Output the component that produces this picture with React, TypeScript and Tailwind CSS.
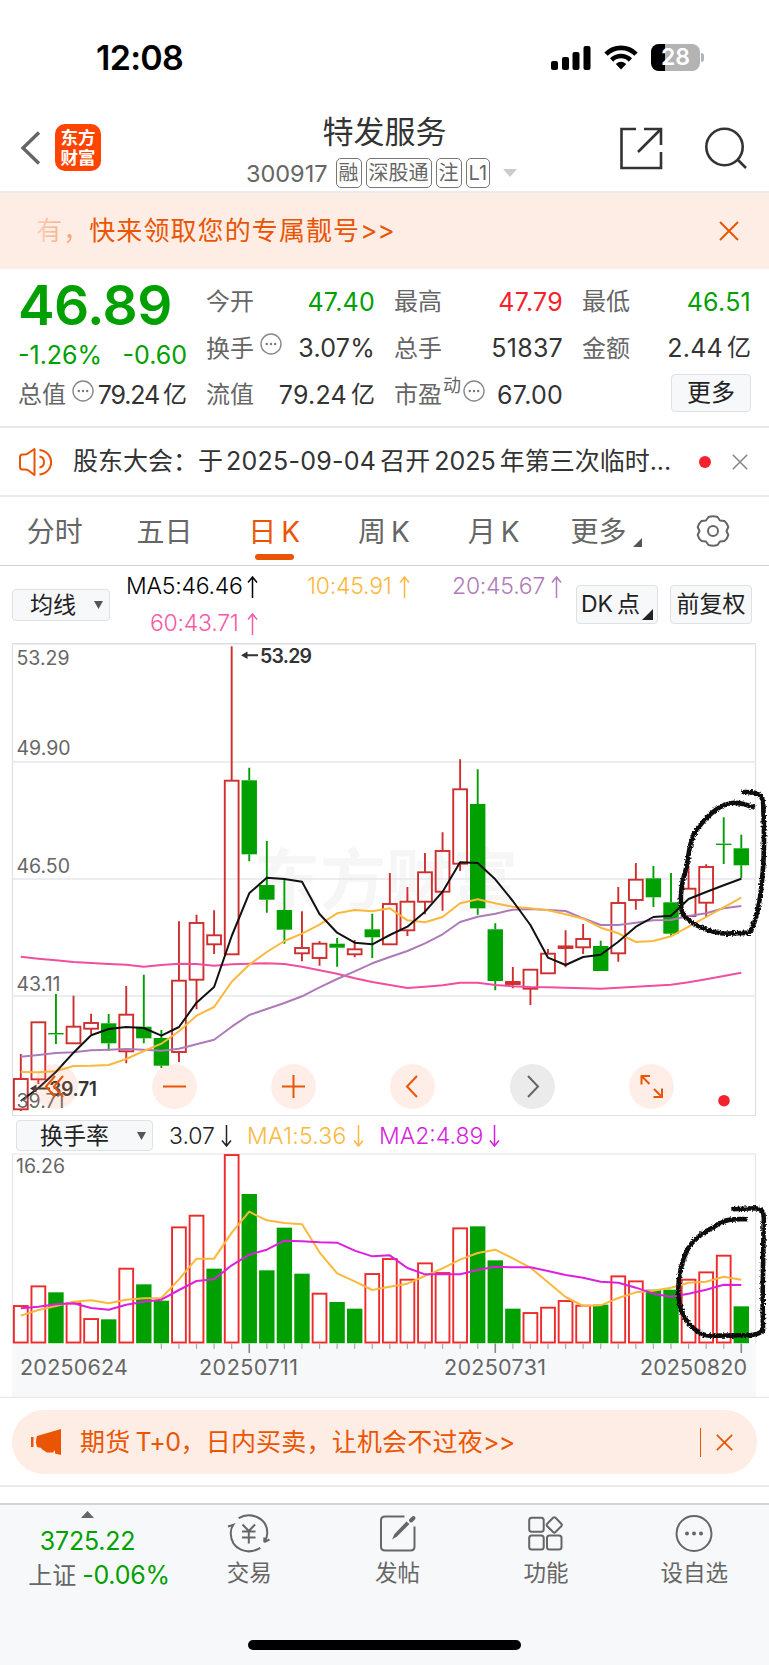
import type { ReactNode } from "react";

const GREEN = "#00a000";
const RED = "#cf2e2e";

type Candle = [kind: "r" | "g", top: number, bottom: number, high: number, low: number];

// body top, body bottom, wick top, wick bottom
const candles: Candle[] = [
  ["r", 1079, 1109.3, 1054, 1111],
  ["r", 1022.3, 1079.3, 1022.3, 1084],
  ["g", 1033, 1034.4, 994, 1044],
  ["r", 1026.7, 1043.3, 995.7, 1043.3],
  ["r", 1023, 1028.7, 1013.7, 1034],
  ["g", 1023.3, 1043.3, 1014, 1050.7],
  ["r", 1014.7, 1051.3, 986, 1063.3],
  ["g", 1026.7, 1038.3, 974.7, 1043.3],
  ["g", 1038, 1065.7, 1030, 1068],
  ["r", 980.7, 1052, 921.3, 1062],
  ["r", 923, 979.7, 914.7, 1009.3],
  ["r", 935.3, 944.3, 910.3, 954],
  ["r", 780.7, 954.3, 646.3, 954.3],
  ["g", 780.3, 854.3, 767.7, 861.3],
  ["g", 885, 899.7, 841, 912.7],
  ["g", 910, 929.7, 879, 943.7],
  ["r", 948, 953.3, 911.3, 961.3],
  ["r", 943.7, 958, 941, 965.7],
  ["g", 943.7, 947.7, 938, 966.7],
  ["r", 949.3, 954.3, 940, 957.3],
  ["g", 929.3, 937.3, 913.7, 958],
  ["r", 904, 944.3, 873, 944.3],
  ["r", 901.7, 930.3, 887, 936],
  ["r", 872.3, 901.7, 853, 914.3],
  ["r", 851, 891.7, 832.3, 910.7],
  ["r", 789.3, 863.7, 759.3, 871],
  ["g", 804, 908.3, 769.3, 914.7],
  ["g", 929.3, 981, 923.3, 990.3],
  ["r", 982, 984, 967, 988.3],
  ["r", 969.7, 988.7, 969.7, 1005],
  ["r", 953.7, 973.3, 949, 973.3],
  ["r", 946.4, 948, 930.3, 967.3],
  ["r", 939, 947.3, 924, 954],
  ["g", 946, 971, 940.7, 971],
  ["r", 903, 953.3, 887, 961.7],
  ["r", 879.7, 900, 863, 909.7],
  ["g", 878.3, 897.3, 866, 907],
  ["g", 902.3, 933.7, 873, 935.7],
  ["r", 888.7, 916, 866, 916],
  ["r", 867, 902.7, 864.3, 917.3],
  ["g", 843.6, 845, 817.3, 864],
  ["g", 848.3, 865.3, 834.7, 878.3],
];

const ma5 = [1101, 1088, 1072, 1052.7, 1035.3, 1029, 1027, 1028, 1035.7, 1027, 1002.7, 987, 936, 893.3, 877.7, 879, 881.7, 914, 932.7, 942.7, 944.3, 935, 926.7, 911.7, 891.7, 862.3, 863, 879.3, 901, 925, 957.7, 965, 957, 954.7, 941.7, 926.7, 917, 915.7, 899, 892, 885.3, 878.7];
const ma10 = [1072, 1072.3, 1071.3, 1066, 1065.7, 1065, 1059, 1051, 1043.7, 1031.3, 1015.7, 1007, 981.7, 964.7, 952, 941, 933.7, 924.7, 913.3, 910, 911.3, 908.3, 920.3, 922.3, 917, 903.3, 899.3, 903.3, 906.7, 908.3, 910.3, 914.3, 918.7, 927.7, 933.3, 942, 941, 936.3, 926.7, 917, 907.3, 897.7];
const ma20 = [1056.7, 1055, 1053, 1052.3, 1050.3, 1049.7, 1049, 1049.7, 1050.7, 1048.7, 1044.3, 1039.7, 1026.7, 1015, 1009, 1003, 996.3, 987.3, 979, 971.3, 963.3, 957, 951, 943.3, 934.3, 922, 916.7, 913.7, 909.7, 909, 910, 911, 918.3, 925, 925, 922.7, 920.3, 920, 916, 913.3, 908.3, 906];
const ma60 = [956.7, 958.7, 960.3, 962, 963, 964, 964.7, 966.7, 965, 963.7, 964, 965.7, 964.3, 963.7, 963.3, 964, 966.7, 970.3, 973.7, 978.3, 982, 985, 988, 986.7, 985.3, 982.7, 982.7, 985, 986.3, 987, 987.3, 987.7, 988.3, 988.7, 987.7, 986.7, 985.7, 984.7, 982.3, 979.3, 976, 972.7];

// turnover bars, in thirds of a pixel below y = 1110
const turnover = [586, 527, 547, 578, 625, 628, 474, 523, 572, 350, 315, 476, 133, 252, 481, 353, 491, 549, 576, 596, 490, 445, 507, 458, 487, 353, 349, 451, 596, 607, 591, 571, 585, 584, 497, 512, 539, 539, 507, 485, 435, 589];
const turnoverKinds = "rrgrrgrggrrgrggggrggrrrrrrgggrrrrgrrggrrrg";
const tma1 = [617, 600, 588, 575, 571, 580, 569, 565, 564, 508, 446, 446, 368, 305, 331, 339, 343, 427, 490, 514, 540, 530, 521, 498, 475, 449, 429, 419, 445, 473, 517, 561, 588, 586, 564, 547, 542, 533, 518, 515, 500, 509];
const tma2 = [595, 590, 583, 580, 594, 599, 584, 575, 569, 540, 513, 508, 466, 434, 419, 392, 394, 397, 398, 422, 439, 436, 474, 493, 493, 493, 480, 470, 472, 472, 483, 495, 503, 515, 518, 533, 551, 560, 551, 539, 524, 525];

const cx = (i: number) => 20.8 + i * 17.573;
const ty = (v: number) => 1110 + v / 3;
const line = (ys: number[]) => ys.map((y, i) => `${cx(i).toFixed(1)},${y}`).join(" ");

const Close = ({ size, className = "" }: { size: number; className?: string }) => (
  <svg width={size} height={size} viewBox="0 0 20 20" className={className} fill="none" stroke="currentColor" strokeWidth="2">
    <path d="M1 1L19 19M19 1L1 19" />
  </svg>
);

const Info = () => (
  <svg width="22" height="22" viewBox="0 0 22 22" className="shrink-0">
    <circle cx="11" cy="11" r="10" fill="none" stroke="#888" strokeWidth="1.4" />
    <circle cx="6.8" cy="11" r="1.2" fill="#777" />
    <circle cx="11" cy="11" r="1.2" fill="#777" />
    <circle cx="15.2" cy="11" r="1.2" fill="#777" />
  </svg>
);

const Arrow = ({ down = false }: { down?: boolean }) => (
  <svg width="11" height="22" viewBox="0 0 11 22" fill="none" stroke="currentColor" strokeWidth="1.5" className={down ? "rotate-180" : ""}>
    <path d="M5.5 22V1M1 6.5L5.5 1L10 6.5" />
  </svg>
);

const StatusBar = () => (
  <div className="flex h-[101px] items-start justify-between pl-[96px] pr-[65px] pt-[43px]">
    <span className="text-[34px] font-semibold leading-[30px] tracking-[-0.02em] text-black">12:08</span>
    <div className="flex items-center gap-[13px] pt-px">
      <svg width="40" height="26" viewBox="0 0 40 26">
        <rect x="0" y="16" width="7" height="9" rx="2" />
        <rect x="11" y="12" width="7" height="13" rx="2" />
        <rect x="21.5" y="7" width="7" height="18" rx="2" />
        <rect x="32.5" y="1" width="7" height="24" rx="2" />
      </svg>
      <svg width="34" height="25" viewBox="0 0 34 25" fill="none" stroke="black" strokeWidth="4.6">
        <path d="M2 9.2C10 0.8 24 0.8 32 9.2" />
        <path d="M7.6 15C13 9.7 21 9.7 26.4 15" />
        <path d="M17 24.5L11.8 19Q17 14.5 22.2 19Z" fill="black" stroke="none" />
      </svg>
      <div className="flex items-center">
        <div className="relative h-[27px] w-[49px] overflow-hidden rounded-[8px] bg-[#b3b3b3]">
          <div className="absolute inset-y-0 left-0 w-[14px] bg-black" />
          <span className="relative block text-center text-[23px] font-semibold leading-[27px] text-white">28</span>
        </div>
        <div className="ml-[1px] h-[9px] w-[3px] rounded-r-full bg-[#b3b3b3]" />
      </div>
    </div>
  </div>
);

const Tag = ({ children }: { children: ReactNode }) => (
  <span className="flex h-[30px] items-center rounded-[5px] border-[1.5px] border-[#777] px-[2px] text-[20px] leading-none text-[#666]">{children}</span>
);

const Header = () => (
  <header className="flex h-[92px] items-start justify-between border-b-2 border-[#ebebee]">
    <div className="flex w-[200px] items-center gap-[14px] pl-[20px] pt-[23px]">
      <svg width="21" height="34" viewBox="0 0 21 34" fill="none" stroke="#666" strokeWidth="3.4">
        <path d="M19 1.5L3 17L19 32.5" />
      </svg>
      <div className="flex h-[47px] w-[46px] flex-col items-center justify-center rounded-[10px] bg-[#ff4400] text-[17.5px] font-bold leading-[20px] text-white">
        <span>东方</span>
        <span>财富</span>
      </div>
    </div>
    <div className="flex flex-col items-center pt-[11px]">
      <h1 className="text-[31px] leading-[40px] text-[#333]">特发服务</h1>
      <div className="mt-[6px] flex items-center gap-[4px] pr-[6px]">
        <span className="mr-[4px] text-[23.5px] leading-[29px] text-[#666]">300917</span>
        <Tag>融</Tag>
        <Tag>深股通</Tag>
        <Tag>注</Tag>
        <Tag>L1</Tag>
        <svg width="14" height="8" viewBox="0 0 14 8" className="ml-[9px]"><path d="M0 0H14L7 8Z" fill="#ccc" /></svg>
      </div>
    </div>
    <div className="flex w-[200px] items-center justify-end gap-[41px] pr-[22px] pt-[26px]">
      <svg width="44" height="43" viewBox="0 0 44 43" fill="none" stroke="#333" strokeWidth="2.6">
        <path d="M17 2H2.5V41H42V25M25 2H42V18M42 2L19 25" />
      </svg>
      <svg width="43" height="43" viewBox="0 0 43 43" fill="none" stroke="#333" strokeWidth="2.6">
        <circle cx="20.5" cy="20" r="18.2" />
        <path d="M33.5 32.5L42 41" />
      </svg>
    </div>
  </header>
);

const NoticeBanner = () => (
  <div className="flex h-[76px] items-center justify-between bg-[#feede5] pl-[30px] pr-[30px] text-[#ea5504]">
    <div className="flex text-[26px] leading-[36px] tracking-[1.1px]">
      <span className="-mr-px bg-linear-to-r from-[#fbd8c6] to-[#ef8a56] bg-clip-text pl-[6px] text-transparent">有，</span>
      <span>快来领取您的专属靓号<span className="tracking-normal">&gt;&gt;</span></span>
    </div>
    <Close size={20} />
  </div>
);

const Cell = ({ label, sup, info, value, unit, color = "text-[#333]", tight = false }: { label: string; sup?: string; info?: boolean; value: string; unit?: string; color?: string; tight?: boolean }) => (
  <div className="flex h-[46.5px] items-center justify-between whitespace-nowrap">
    <span className="flex items-center text-[24px] text-[#666]">
      {label}
      {sup && <sup className="top-0 mb-[18px] ml-px text-[18px] leading-none">{sup}</sup>}
      {info && <span className={sup ? "mb-[9px] ml-[2px]" : "mb-[9px] ml-[6px]"}><Info /></span>}
    </span>
    <span className={`flex gap-[4px] text-[25px] ${tight ? "tracking-[-0.045em]" : "tracking-[0.01em]"} ${color}`}>
      {value}
      {unit && <span className="text-[24px] tracking-normal">{unit}</span>}
    </span>
  </div>
);

const Quote = () => (
  <section className="grid h-[159px] grid-cols-4 gap-x-[19px] border-b-2 border-[#e9e9ec] px-[18px] pt-[10px]">
    <div>
      <div className="h-[50px] text-[55px] font-semibold leading-[52px] tracking-[-0.01em] text-[#00a000]">46.89</div>
      <div className="flex h-[43px] items-end justify-between whitespace-nowrap text-[25px] leading-[34px] text-[#00a000]">
        <span>-1.26%</span>
        <span>-0.60</span>
      </div>
      <Cell label="总值" info tight value="79.24" unit="亿" />
    </div>
    <div>
      <Cell label="今开" value="47.40" color="text-[#00a000]" />
      <Cell label="换手" info value="3.07%" />
      <Cell label="流值" value="79.24" unit="亿" />
    </div>
    <div>
      <Cell label="最高" value="47.79" color="text-[#f5222d]" />
      <Cell label="总手" value="51837" />
      <Cell label="市盈" sup="动" info value="67.00" />
    </div>
    <div>
      <Cell label="最低" value="46.51" color="text-[#00a000]" />
      <Cell label="金额" value="2.44" unit="亿" />
      <div className="flex h-[46.5px] items-center justify-end">
        <button className="mb-[4px] h-[38px] w-[80px] rounded-[4px] border-[1.5px] border-[#e0e1e6] bg-[#f7f8fa] text-[24px] leading-none text-[#222]">更多</button>
      </div>
    </div>
  </section>
);

const Announcement = () => (
  <div className="flex h-[69px] items-center border-b-2 border-[#ebebee] pl-[19px] pr-[21px]">
    <svg width="34" height="28" viewBox="0 0 34 28" fill="none" stroke="#ea5504" strokeWidth="2" strokeLinejoin="round">
      <path d="M1 9Q1 6.5 3.5 6.5H6Q8 6.5 9.5 5L15.5 1V27L9.5 22.5Q8 21.5 6 21.5H3.5Q1 21.5 1 19Z" />
      <path d="M20.5 8.5C26.5 9.5 26.5 18.5 20.5 19.5M20.5 2C36 4 36 24.5 20.5 26.5" />
    </svg>
    <p className="ml-[20px] w-[606px] whitespace-nowrap text-[25px] text-[#333]">
      股东大会：于<span className="ml-[3px] mr-[4px] tracking-[0.01em]">2025-09-04</span>召开<span className="mx-[4px] tracking-normal">2025</span>年第三次临时...
    </p>
    <span className="ml-[20px] h-[12px] w-[12px] rounded-full bg-[#f5222d]" />
    <Close size={16} className="ml-auto text-[#888]" />
  </div>
);

const Tabs = () => {
  const tabs = [["分时"], ["五日"], ["日", "K"], ["周", "K"], ["月", "K"]];
  return (
    <nav className="flex h-[69px] items-center border-b border-[#cfd0d2] text-[28px] text-[#666]">
      {tabs.map((tab) => (
        <span key={tab[0]} className={`relative flex h-full w-[109.7px] items-center justify-center gap-[5px] pt-[2px] ${tab[0] === "日" ? "text-[#ea5504]" : ""}`}>
          {tab.map((part) => <span key={part}>{part}</span>)}
          {tab[0] === "日" && <i className="absolute bottom-[5px] h-[6px] w-[39px] rounded-full bg-[#ea5504]" />}
        </span>
      ))}
      <span className="ml-[22px] pt-[2px]">更多</span>
      <svg width="9" height="9" viewBox="0 0 9 9" className="ml-[7px] mt-[22px]"><path d="M9 0V9H0Z" fill="#555" /></svg>
      <svg width="34" height="32" viewBox="0 0 34 32" className="ml-[54px]" fill="none" stroke="#666" strokeWidth="2" strokeLinejoin="round">
        <path d="M12.5 2Q17 0.5 21.5 2L24 5.5L28.5 6Q31.5 8.5 32.3 12L30.5 16L32.3 20Q31.5 23.5 28.5 26L24 26.5L21.5 30Q17 31.5 12.5 30L10 26.5L5.5 26Q2.5 23.5 1.7 20L3.5 16L1.7 12Q2.5 8.5 5.5 6L10 5.5Z" />
        <circle cx="17" cy="16" r="5" />
      </svg>
    </nav>
  );
};

const pill = "flex items-center rounded-[4px] border-[1.5px] border-[#e0e1e6] bg-[#f7f8fa] text-[#222]";

const MaLegend = () => (
  <div className="flex h-[77px] pl-[12px] pr-[17px] text-[23px]">
    <div className={`${pill} mt-[23px] h-[32px] w-[98px] justify-between pl-[17px] pr-[6px]`}>
      <span>均线</span>
      <svg width="9" height="8" viewBox="0 0 9 8"><path d="M0 0H9L4.5 8Z" fill="#555" /></svg>
    </div>
    <div className="ml-[16px] w-[440px] pt-[2px] font-light leading-[37px] tracking-[-0.01em]">
      <div className="flex h-[37px]">
        <span className="flex w-[132px] items-center justify-between text-black">MA5:46.46<Arrow /></span>
        <span className="ml-[49px] flex w-[103px] items-center justify-between text-[#fbb83c]">10:45.91<Arrow /></span>
        <span className="ml-[42px] flex w-[110px] items-center justify-between text-[#b07cba]">20:45.67<Arrow /></span>
      </div>
      <span className="ml-[24px] flex w-[108px] items-center justify-between text-[#f45aa5]">60:43.71<Arrow /></span>
    </div>
    <div className={`${pill} relative ml-auto mt-[19px] h-[39px] w-[82px] gap-[4px] pl-[4px]`}>
      <span>DK</span><span>点</span>
      <svg width="11" height="11" viewBox="0 0 11 11" className="absolute bottom-[3px] right-[4px]"><path d="M11 0V11H0Z" fill="#222" /></svg>
    </div>
    <div className={`${pill} ml-[12px] mt-[19px] h-[39px] w-[82px] justify-center`}>前复权</div>
  </div>
);

const RoundButton = ({ children, gray = false }: { children: ReactNode; gray?: boolean }) => (
  <button className={`flex h-[45px] w-[45px] items-center justify-center rounded-full ${gray ? "bg-[#ebebeb] text-[#666]" : "bg-[#ff9060]/15 text-[#ea5504]"}`}>
    <svg width="25" height="25" viewBox="0 0 25 25" fill="none" stroke="currentColor" strokeWidth="2">{children}</svg>
  </button>
);

const KChart = () => (
  <section className="relative h-[473px]">
    <svg width="769" height="473" viewBox="0 643 769 473" className="block">
      <defs>
        <filter id="rough" x="-10%" y="-10%" width="120%" height="120%">
          <feTurbulence type="fractalNoise" baseFrequency="0.18" numOctaves="2" result="n" />
          <feDisplacementMap in="SourceGraphic" in2="n" scale="12" xChannelSelector="R" yChannelSelector="G" />
        </filter>
      </defs>
      <text x="386" y="904" textAnchor="middle" className="text-[66px] font-bold" fill="#f6f6f7">东方财富</text>
      <g stroke="#e6e7f0" strokeWidth="1.5">
        <path d="M12 762H756M12 879H756M12 996H756" />
        <path d="M12.5 643V1115.5H755.5V643" fill="none" stroke="#e0e1e6" strokeWidth="1.2" />
        <path d="M12 643.5H756" stroke="#dcdce4" strokeWidth="2" />
      </g>
      <g className="text-[19.5px]" fill="#666">
        <text x="16.5" y="665">53.29</text>
        <text x="16.5" y="755">49.90</text>
        <text x="16.5" y="873">46.50</text>
        <text x="16.5" y="991">43.11</text>
      </g>
      {candles.map(([kind, top, bottom, high, low], i) => {
        const color = kind === "r" ? RED : GREEN;
        const x = cx(i);
        // a flat body is drawn as a dash
        const flat = bottom - top < 2.5;
        return (
          <g key={i} stroke={color} strokeWidth="1.9">
            <path d={`M${x} ${high}V${top}M${x} ${bottom}V${low}`} />
            {kind === "r" ? (
              <rect x={x - 6.9} y={top} width="13.8" height={bottom - top} fill={flat ? color : "none"} />
            ) : (
              <rect x={x - 7.7} y={top} width="15.4" height={bottom - top} fill={color} stroke="none" />
            )}
          </g>
        );
      })}
      <g fill="none" strokeWidth="2" strokeLinejoin="round">
        <polyline points={line(ma60)} stroke="#f04f9f" />
        <polyline points={line(ma20)} stroke="#ae7bb8" />
        <polyline points={line(ma10)} stroke="#fbb83c" />
        <polyline points={line(ma5)} stroke="#111" />
      </g>
      <g fill="#333" className="text-[19.5px] font-semibold">
        <path d="M241 655.3L247.5 651.5V659ZM247 654.3H258V656.3H247Z" />
        <text x="260" y="662.5" textLength="52">53.29</text>
        <path d="M30 1088.5L36.5 1084.5V1092.5ZM36 1087.5H50V1089.5H36Z" />
        <text x="49" y="1096" textLength="48">39.71</text>
      </g>
      <text x="16.5" y="1108" className="text-[19.5px]" fill="#666">39.71</text>
      <circle cx="724" cy="1100.7" r="5.8" fill="#f5222d" />
      <g transform="translate(369 770.3) scale(0.3333)" fill="none" stroke="#111" strokeWidth="14" filter="url(#rough)">
        <path d="M1118 66C1170 62 1184 74 1183 110C1186 180 1187 250 1180 320C1176 390 1160 460 1142 487C1110 488 1080 492 1055 489C1010 482 950 455 939 425C932 390 936 340 950 300C962 250 958 215 985 175C1025 125 1055 103 1090 98C1115 96 1135 104 1157 112" />
      </g>
    </svg>
    <div className="absolute left-[32.5px] top-[421px] flex gap-[74.3px]">
      <RoundButton><path d="M12 2L3 12.5L12 23M20 2L11 12.5L20 23" /></RoundButton>
      <RoundButton><path d="M1 12.5H24" /></RoundButton>
      <RoundButton><path d="M1 12.5H24M12.5 1V24" /></RoundButton>
      <RoundButton><path d="M17 2L7 12.5L17 23" /></RoundButton>
      <RoundButton gray><path d="M8 2L18 12.5L8 23" /></RoundButton>
      <RoundButton><path d="M11 2H2.5V10.5M2.5 2L10.5 10M23 14.5V23H14.5M23 23L15 15" /></RoundButton>
    </div>
  </section>
);

const TurnoverLegend = () => (
  <div className="flex h-[37px] items-center pl-[16px] pt-[2px] text-[23px] leading-[30px]">
    <div className={`${pill} h-[31px] w-[137px] justify-between pl-[23px] pr-[6px]`}>
      <span>换手率</span>
      <svg width="9" height="8" viewBox="0 0 9 8"><path d="M0 0H9L4.5 8Z" fill="#555" /></svg>
    </div>
    <span className="ml-[16px] flex w-[63px] items-center justify-between font-light text-[#222]">3.07<Arrow down /></span>
    <span className="ml-[15px] flex w-[117px] items-center justify-between font-light tracking-[0.01em] text-[#fbb83c]">MA1:5.36<Arrow down /></span>
    <span className="ml-[15px] flex w-[121px] items-center justify-between font-light text-[#d81fe0]">MA2:4.89<Arrow down /></span>
  </div>
);

const TurnoverChart = () => (
  <svg width="769" height="245" viewBox="0 1153 769 245" className="block">
    <rect x="12" y="1343" width="744" height="54" fill="#f7f8fa" />
    <path d="M12.5 1343V1154H755.5V1343" fill="none" stroke="#e3e4e8" strokeWidth="1.2" />
    <path d="M0 1397.5H769" stroke="#e9e9ec" strokeWidth="1.5" />
    <text x="16" y="1172.5" className="text-[19.5px]" fill="#666">16.26</text>
    {turnover.map((v, i) =>
      turnoverKinds[i] === "r" ? (
        <rect key={i} x={cx(i) - 6.9} y={ty(v) + 0.7} width="13.8" height={1341.8 - ty(v)} fill="none" stroke="#ee2a2a" strokeWidth="1.9" />
      ) : (
        <rect key={i} x={cx(i) - 7.7} y={ty(v)} width="15.4" height={1343.2 - ty(v)} fill={GREEN} />
      ),
    )}
    <g fill="none" strokeWidth="2" strokeLinejoin="round">
      <polyline points={line(tma1.map(ty))} stroke="#fbb83c" />
      <polyline points={line(tma2.map(ty))} stroke="#dd1fe0" />
    </g>
    {turnover.map((_, i) => {
      if (i < 8) return null;
      const major = i === 13 || i === 27 || i === 41;
      return <path key={i} d={`M${cx(i)} 1343.5V${major ? 1353 : 1349}`} stroke={major ? "#888" : "#aaa"} strokeWidth={major ? 1.6 : 1.2} />;
    })}
    <g className="text-[21.5px]" fill="#666">
      <text x="20" y="1375" textLength="108">20250624</text>
      <text x="199" y="1375" textLength="99">20250711</text>
      <text x="444" y="1375" textLength="102">20250731</text>
      <text x="640" y="1375" textLength="107">20250820</text>
    </g>
    <g transform="translate(369 1110.3) scale(0.3333)" fill="none" stroke="#111" strokeWidth="14" filter="url(#rough)">
      <path d="M1087 297L1160 294C1182 295 1187 308 1184 340L1181 560L1182 660C1160 682 1120 672 1085 676C1050 674 1020 682 995 670C955 645 932 605 929 560C925 510 935 460 957 415C975 385 1005 365 1035 350C1065 325 1095 326 1136 327" />
    </g>
  </svg>
);

const Promo = () => (
  <div className="h-[89px] border-b-2 border-[#ebebee] px-[12px] pt-[12px]">
    <div className="flex h-[64px] items-center rounded-[32px] bg-[#feede5] pl-[19px] pr-[24px] text-[#ea5504]">
      <svg width="31" height="26" viewBox="0 0 31 26" fill="currentColor">
        <path d="M0 8H2.5V18H0ZM6 7L30 0V26L24 24.5V21L22 23.5H16L10.5 20V19L6 18Q4 13 6 7Z" />
      </svg>
      <span className="ml-[18px] pt-px text-[25px] tracking-[0.2px]">期货<span className="ml-[5px] tracking-[-0.02em]">T+0</span>，日内买卖，让机会不过夜<span className="tracking-[-0.03em]">&gt;&gt;</span></span>
      <i className="ml-auto h-[29px] w-[1.5px] bg-[#ea5504]" />
      <Close size={17} className="ml-[15px]" />
    </div>
  </div>
);

const NavItem = ({ label, children }: { label: string; children: ReactNode }) => (
  <div className="flex w-[148.4px] flex-col items-center">
    <svg width="44" height="40" viewBox="0 0 44 40" fill="none" stroke="#666" strokeWidth="2">{children}</svg>
    <span className="mt-[4px] text-[22.5px] leading-[32px] text-[#666]">{label}</span>
  </div>
);

const BottomBar = () => (
  <footer className="flex h-[162px] flex-col justify-between border-t-2 border-[#d3d4d6] bg-[#f7f8fa] pb-[15px]">
    <div className="flex">
      <div className="flex w-[175px] flex-col items-center pt-[6px] text-[25px] tracking-[-0.01em] text-[#00a000]">
        <svg width="13" height="7" viewBox="0 0 13 7"><path d="M6.5 0L13 7H0Z" fill="#666" /></svg>
        <span className="mt-[6px] leading-[34px]">3725.22</span>
        <span className="ml-[23px] whitespace-nowrap leading-[34px]"><span className="mr-[6px] text-[24px] tracking-normal text-[#666]">上证</span>-0.06%</span>
      </div>
      <div className="flex pt-[8px]">
        <NavItem label="交易">
          <path d="M11.7 5.2C23 -2 40.5 5 40.3 20Q40.2 25 37.3 29.2L42.5 26.5M37.3 29.2V24.5" />
          <path d="M1 13.5L6.3 11.8Q3.7 15.5 3.7 20C4 37 21 42.5 33.3 34.8" />
          <path d="M15.5 11.5L21.8 18L28 11.5M21.8 18V30.5M15 18.5H28.5M15 24.5H28.5" />
        </NavItem>
        <NavItem label="发帖">
          <path d="M28.5 3.5H9Q5 3.5 5 7.5V33.5Q5 37.5 9 37.5H34.5Q38.5 37.5 38.5 33.5V13.5" />
          <path d="M30.5 8.5L33.5 11L21 23.5L16 26.5L18.5 21Z" fill="#666" stroke="none" />
          <path d="M35 7.5L37.5 5" strokeWidth="4" strokeLinecap="round" />
        </NavItem>
        <NavItem label="功能">
          <rect x="5.2" y="4.8" width="14.5" height="14" rx="2.5" />
          <path d="M29.3 4.6Q30.3 3.8 31.3 4.6L37.5 11Q38.3 12 37.5 13L31.3 19.2Q30.3 20 29.3 19.2L23 13Q22.2 12 23 11Z" />
          <rect x="5.2" y="22.5" width="14.5" height="14" rx="2.5" />
          <rect x="23" y="22.5" width="14.5" height="14" rx="2.5" />
        </NavItem>
        <NavItem label="设自选">
          <circle cx="22" cy="20.5" r="17.5" />
          <g fill="#666" stroke="none">
            <circle cx="15" cy="20.5" r="2" />
            <circle cx="22" cy="20.5" r="2" />
            <circle cx="29" cy="20.5" r="2" />
          </g>
        </NavItem>
      </div>
    </div>
    <div className="h-[10px] w-[273px] self-center rounded-full bg-black" />
  </footer>
);

export default function App() {
  return (
    <div className="w-[769px] overflow-hidden bg-white font-['Inter','Noto_Sans_CJK_SC',sans-serif]">
      <StatusBar />
      <Header />
      <NoticeBanner />
      <Quote />
      <Announcement />
      <Tabs />
      <MaLegend />
      <KChart />
      <TurnoverLegend />
      <TurnoverChart />
      <Promo />
      <div className="h-[16px]" />
      <BottomBar />
    </div>
  );
}
